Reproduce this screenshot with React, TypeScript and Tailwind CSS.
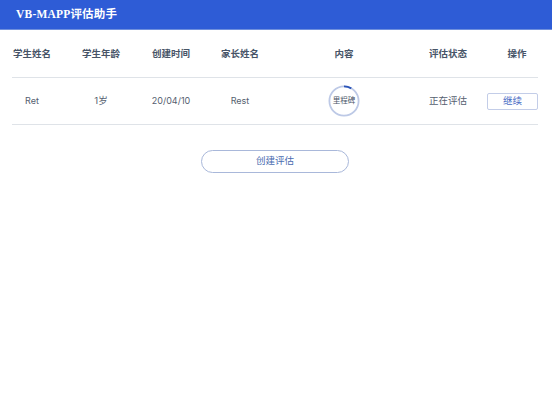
const font = "font-['Inter','Noto_Sans_CJK_SC',sans-serif]";
const columns = 'grid grid-cols-[40px_98px_42px_96px_112px_96px_42px] items-center';

const headers = ['学生姓名', '学生年龄', '创建时间', '家长姓名', '内容', '评估状态', '操作'];

function ProgressRing() {
  return (
    <div className="relative w-[32px] h-[32px] flex items-center justify-center">
      <svg className="absolute inset-0" width="32" height="32" viewBox="0 0 32 32">
        <circle cx="16" cy="16" r="14.6" fill="none" stroke="#bdc9e6" strokeWidth="1.8" />
        <path d="M16 1.4 A14.6 14.6 0 0 1 23.3 3.4" fill="none" stroke="#2c55b8" strokeWidth="1.8" />
      </svg>
      <span className="relative text-[7.5px] text-[#4a5568] whitespace-nowrap">里程碑</span>
    </div>
  );
}

export default function App() {
  return (
    <div className={`w-[552px] h-[414px] bg-white overflow-hidden ${font}`}>
      <header className="h-[30px] bg-[#2e5cd6] flex items-center px-[16px] border-b border-[#6f8fdc]">
        <h1 className="text-[11.5px] tracking-[0.2px] font-bold text-white font-['Liberation_Serif','Noto_Sans_CJK_SC',serif]">VB-MAPP评估助手</h1>
      </header>

      <div className="mx-[12px] w-[526px]">
        <div className={`${columns} h-[48px] pt-[2px] border-b border-[#dfe3e8] text-[9.5px] font-semibold text-[#475467]`}>
          {headers.map((h) => (
            <div key={h} className="flex justify-center whitespace-nowrap">{h}</div>
          ))}
        </div>

        <div className={`${columns} h-[47px] border-b border-[#dfe3e8] text-[9.5px] text-[#55606f]`}>
          <div className="flex justify-center text-[9px]">Ret</div>
          <div className="flex justify-center">1岁</div>
          <div className="flex justify-center text-[9px]">20/04/10</div>
          <div className="flex justify-center text-[9px]">Rest</div>
          <div className="flex justify-center"><ProgressRing /></div>
          <div className="flex justify-center whitespace-nowrap">正在评估</div>
          <div className="flex justify-end">
            <button className="w-[51px] h-[17px] shrink-0 border border-[#c3cde8] rounded-[2px] text-[9.5px] text-[#4a6cc4]">继续</button>
          </div>
        </div>
      </div>

      <div className="flex justify-center mt-[25px] pr-[2px]">
        <button className="w-[148px] h-[23px] rounded-full border border-[#a9b8da] text-[9.5px] text-[#4a6cb0]">创建评估</button>
      </div>
    </div>
  );
}
